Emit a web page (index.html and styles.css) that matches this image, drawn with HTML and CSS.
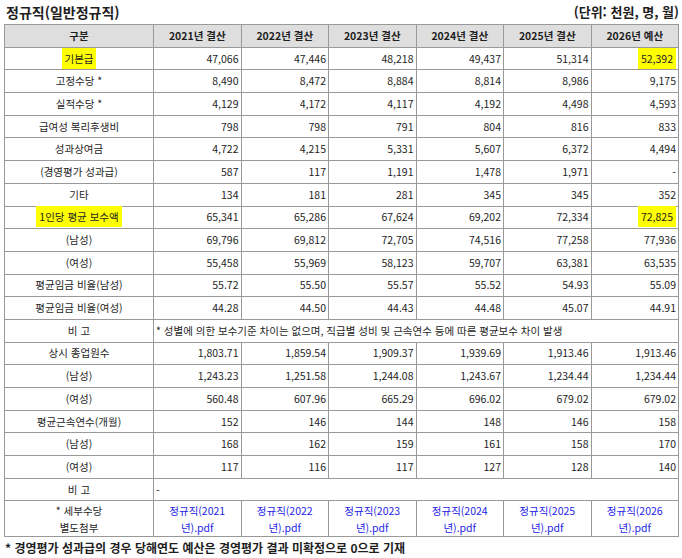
FILE: index.html
```html
<!DOCTYPE html>
<html lang="ko">
<head>
<meta charset="utf-8">
<title>정규직(일반정규직)</title>
<link rel="stylesheet" href="styles.css">
</head>
<body>
<div class="page">
  <div class="titlebar">
    <h1 class="title">정규직(일반정규직)</h1>
    <span class="unit">(단위: 천원, 명, 월)</span>
  </div>
  <table class="tbl">
    <colgroup>
      <col class="c-label">
      <col><col><col><col><col><col>
    </colgroup>
    <thead>
      <tr>
        <th>구분</th><th>2021년 결산</th><th>2022년 결산</th><th>2023년 결산</th><th>2024년 결산</th><th>2025년 결산</th><th>2026년 예산</th>
      </tr>
    </thead>
    <tbody>
      <tr><td class="lbl"><span class="hl">기본급</span></td><td>47,066</td><td>47,446</td><td>48,218</td><td>49,437</td><td>51,314</td><td><span class="hl">52,392</span></td></tr>
      <tr><td class="lbl">고정수당 *</td><td>8,490</td><td>8,472</td><td>8,884</td><td>8,814</td><td>8,986</td><td>9,175</td></tr>
      <tr><td class="lbl">실적수당 *</td><td>4,129</td><td>4,172</td><td>4,117</td><td>4,192</td><td>4,498</td><td>4,593</td></tr>
      <tr><td class="lbl">급여성 복리후생비</td><td>798</td><td>798</td><td>791</td><td>804</td><td>816</td><td>833</td></tr>
      <tr><td class="lbl">성과상여금</td><td>4,722</td><td>4,215</td><td>5,331</td><td>5,607</td><td>6,372</td><td>4,494</td></tr>
      <tr><td class="lbl">(경영평가 성과급)</td><td>587</td><td>117</td><td>1,191</td><td>1,478</td><td>1,971</td><td>-</td></tr>
      <tr><td class="lbl">기타</td><td>134</td><td>181</td><td>281</td><td>345</td><td>345</td><td>352</td></tr>
      <tr><td class="lbl"><span class="hl">1인당 평균 보수액</span></td><td>65,341</td><td>65,286</td><td>67,624</td><td>69,202</td><td>72,334</td><td><span class="hl">72,825</span></td></tr>
      <tr><td class="lbl">(남성)</td><td>69,796</td><td>69,812</td><td>72,705</td><td>74,516</td><td>77,258</td><td>77,936</td></tr>
      <tr><td class="lbl">(여성)</td><td>55,458</td><td>55,969</td><td>58,123</td><td>59,707</td><td>63,381</td><td>63,535</td></tr>
      <tr><td class="lbl">평균임금 비율(남성)</td><td>55.72</td><td>55.50</td><td>55.57</td><td>55.52</td><td>54.93</td><td>55.09</td></tr>
      <tr><td class="lbl">평균임금 비율(여성)</td><td>44.28</td><td>44.50</td><td>44.43</td><td>44.48</td><td>45.07</td><td>44.91</td></tr>
      <tr><td class="lbl">비 고</td><td class="note" colspan="6">* 성별에 의한 보수기준 차이는 없으며, 직급별 성비 및 근속연수 등에 따른 평균보수 차이 발생</td></tr>
      <tr><td class="lbl">상시 종업원수</td><td>1,803.71</td><td>1,859.54</td><td>1,909.37</td><td>1,939.69</td><td>1,913.46</td><td>1,913.46</td></tr>
      <tr><td class="lbl">(남성)</td><td>1,243.23</td><td>1,251.58</td><td>1,244.08</td><td>1,243.67</td><td>1,234.44</td><td>1,234.44</td></tr>
      <tr><td class="lbl">(여성)</td><td>560.48</td><td>607.96</td><td>665.29</td><td>696.02</td><td>679.02</td><td>679.02</td></tr>
      <tr><td class="lbl">평균근속연수(개월)</td><td>152</td><td>146</td><td>144</td><td>148</td><td>146</td><td>158</td></tr>
      <tr><td class="lbl">(남성)</td><td>168</td><td>162</td><td>159</td><td>161</td><td>158</td><td>170</td></tr>
      <tr><td class="lbl">(여성)</td><td>117</td><td>116</td><td>117</td><td>127</td><td>128</td><td>140</td></tr>
      <tr><td class="lbl">비 고</td><td class="note" colspan="6">-</td></tr>
      <tr class="files">
        <td class="lbl">* 세부수당<br>별도첨부</td>
        <td class="file"><a href="#">정규직(2021년).pdf</a></td>
        <td class="file"><a href="#">정규직(2022년).pdf</a></td>
        <td class="file"><a href="#">정규직(2023년).pdf</a></td>
        <td class="file"><a href="#">정규직(2024년).pdf</a></td>
        <td class="file"><a href="#">정규직(2025년).pdf</a></td>
        <td class="file"><a href="#">정규직(2026년).pdf</a></td>
      </tr>
    </tbody>
  </table>
  <p class="footnote">* 경영평가 성과급의 경우 당해연도 예산은 경영평가 결과 미확정으로 0으로 기재</p>
</div>
</body>
</html>
```

FILE: styles.css
```css
html, body {
  margin: 0;
  padding: 0;
  background: #ffffff;
}

body {
  font-family: "Noto Sans CJK KR", "Noto Sans", sans-serif;
  color: #1e1e1e;
}

.page {
  padding: 0 3px 0 4px;
}

.titlebar {
  display: flex;
  justify-content: space-between;
  align-items: center;
  height: 24px;
}

.title {
  margin: 0;
  font-size: 14px;
  font-weight: bold;
  color: #1e1e1e;
  line-height: 20px;
  padding-left: 2px;
}

.unit {
  font-size: 13px;
  font-weight: bold;
  line-height: 20px;
}

.tbl {
  width: 675px;
  table-layout: fixed;
  border-collapse: collapse;
  border: 1px solid #333333;
  font-size: 10.5px;
}

.c-label {
  width: 149px;
}

.tbl th,
.tbl td {
  border: 1px solid #999999;
  padding: 0 2px;
  height: 21.7px;
  line-height: 14px;
  white-space: nowrap;
}

.tbl th {
  background: #dedede;
  font-weight: bold;
  text-align: center;
}

.tbl td {
  text-align: right;
}

.tbl td.lbl {
  text-align: center;
}

.tbl td.note {
  text-align: left;
}

.hl {
  background: #ffff00;
  padding: 3px 3px;
}

.files td {
  height: 35px;
  line-height: 17px;
  white-space: normal;
}

.tbl td.file {
  text-align: center;
  padding: 0 12px;
}

.file a {
  color: #2424e8;
  text-decoration: none;
}

.footnote {
  margin: 3px 0 0 1px;
  font-size: 12px;
  font-weight: bold;
  line-height: 16px;
}
```
